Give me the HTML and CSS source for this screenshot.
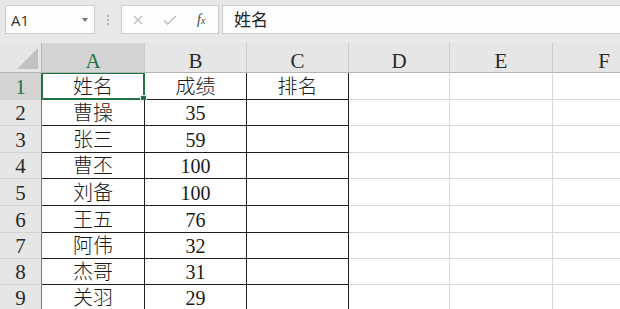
FILE: index.html
```html
<!DOCTYPE html>
<html>
<head>
    <title>成绩表</title>
    <link rel="stylesheet" href="styles.css">
</head>
<body>
    <div class="bar">
        <div class="namebox"><span>A1</span><i class="caret"></i></div>
        <div class="grip"><i></i><i></i><i></i></div>
        <div class="fbtns">
            <svg class="ico" width="10" height="10" viewBox="0 0 10 10"><path d="M1 1L9 9M9 1L1 9" stroke="#bdbdbd" stroke-width="1.3" fill="none"/></svg>
            <svg class="ico" width="14" height="10" viewBox="0 0 14 10"><path d="M1 5.5L4.5 9L13 1" stroke="#bdbdbd" stroke-width="1.4" fill="none"/></svg>
            <span class="fx">f<span class="fx-x">x</span></span>
        </div>
        <div class="finput">姓名</div>
    </div>

    <div class="sheet">
        <div class="row head">
            <div class="corner"><span class="tri"></span></div>
            <div class="col sel">A</div>
            <div class="col">B</div>
            <div class="col">C</div>
            <div class="col">D</div>
            <div class="col">E</div>
            <div class="col">F</div>
        </div>
        <div class="row tall">
            <div class="num sel">1</div>
            <div class="cell box active">姓名<span class="selbox"><span class="handle"></span></span></div>
            <div class="cell box">成绩</div>
            <div class="cell box">排名</div>
            <div class="cell"></div><div class="cell"></div><div class="cell"></div>
        </div>
        <div class="row">
            <div class="num">2</div>
            <div class="cell box">曹操</div><div class="cell box">35</div><div class="cell box"></div>
            <div class="cell"></div><div class="cell"></div><div class="cell"></div>
        </div>
        <div class="row tall">
            <div class="num">3</div>
            <div class="cell box">张三</div><div class="cell box">59</div><div class="cell box"></div>
            <div class="cell"></div><div class="cell"></div><div class="cell"></div>
        </div>
        <div class="row">
            <div class="num">4</div>
            <div class="cell box">曹丕</div><div class="cell box">100</div><div class="cell box"></div>
            <div class="cell"></div><div class="cell"></div><div class="cell"></div>
        </div>
        <div class="row tall">
            <div class="num">5</div>
            <div class="cell box">刘备</div><div class="cell box">100</div><div class="cell box"></div>
            <div class="cell"></div><div class="cell"></div><div class="cell"></div>
        </div>
        <div class="row tall">
            <div class="num">6</div>
            <div class="cell box">王五</div><div class="cell box">76</div><div class="cell box"></div>
            <div class="cell"></div><div class="cell"></div><div class="cell"></div>
        </div>
        <div class="row">
            <div class="num">7</div>
            <div class="cell box">阿伟</div><div class="cell box">32</div><div class="cell box"></div>
            <div class="cell"></div><div class="cell"></div><div class="cell"></div>
        </div>
        <div class="row">
            <div class="num">8</div>
            <div class="cell box">杰哥</div><div class="cell box">31</div><div class="cell box"></div>
            <div class="cell"></div><div class="cell"></div><div class="cell"></div>
        </div>
        <div class="row">
            <div class="num">9</div>
            <div class="cell box">关羽</div><div class="cell box">29</div><div class="cell box"></div>
            <div class="cell"></div><div class="cell"></div><div class="cell"></div>
        </div>
    </div>
</body>
</html>
```

FILE: styles.css
```css
html, body {
    margin: 0;
    overflow: hidden;
    background-color: #e8e8e8;
}

/* formula bar */
.bar {
    display: flex;
    height: 43px;
    padding-top: 5px;
    box-sizing: border-box;
    align-items: flex-start;
}

.namebox {
    width: 90px;
    height: 29px;
    margin-left: 5px;
    box-sizing: border-box;
    border: 1px solid #cdcdcd;
    background-color: #fdfdfd;
    display: flex;
    align-items: center;
    justify-content: space-between;
    padding: 0 6px 0 5px;
    font-family: "Open Sans", "Noto Sans", sans-serif;
    font-size: 15px;
    color: #333;
}

.caret {
    width: 0;
    height: 0;
    border-top: 4px solid #777;
    border-left: 3px solid transparent;
    border-right: 3px solid transparent;
}

.grip {
    width: 26px;
    height: 29px;
    display: flex;
    flex-direction: column;
    align-items: center;
    justify-content: center;
    gap: 2px;
}

.grip i {
    width: 2px;
    height: 2px;
    background-color: #b3b3b3;
}

.fbtns {
    width: 98px;
    height: 29px;
    box-sizing: border-box;
    border: 1px solid #cdcdcd;
    background-color: #fdfdfd;
    display: flex;
    align-items: center;
    gap: 20px;
    padding-left: 11px;
}

.fx {
    font-family: "Liberation Serif", serif;
    font-style: italic;
    font-size: 14px;
    color: #444;
    width: 12px;
}

.fx-x {
    font-size: 10px;
}

.finput {
    flex: 1;
    height: 29px;
    margin-left: 3px;
    box-sizing: border-box;
    border: 1px solid #cdcdcd;
    border-right: none;
    background-color: #fdfdfd;
    padding-left: 11px;
    font-family: "Noto Sans CJK SC", sans-serif;
    font-size: 17px;
    line-height: 26px;
    color: #222;
}

/* grid */
.sheet {
    display: flex;
    flex-direction: column;
    overflow: hidden;
}

.row {
    display: grid;
    grid-template-columns: 42px 103px 102px 102px 101px 103px 103px;
    height: 26px;
    overflow: hidden;
}

.row.tall {
    height: 27px;
}

.row.head {
    height: 30px;
}

.row > div {
    box-sizing: border-box;
}

.corner,
.col {
    background-color: #e6e6e6;
    border-bottom: 1px solid #b5b5b5;
    border-right: 1px solid #cbcbcb;
}

.corner {
    position: relative;
    border-right-color: #b5b5b5;
}

.tri {
    position: absolute;
    right: 3px;
    bottom: 3px;
    width: 0;
    height: 0;
    border-bottom: 21px solid #c2c2c2;
    border-left: 21px solid transparent;
}

.col {
    display: flex;
    justify-content: center;
    align-items: flex-end;
    font-family: "Liberation Serif", serif;
    font-size: 21px;
    line-height: 22px;
    color: #2a2a2a;
}

.num {
    background-color: #e6e6e6;
    border-right: 1px solid #777;
    border-bottom: 1px solid #d2d2d2;
    display: flex;
    justify-content: center;
    align-items: flex-end;
    font-family: "Liberation Serif", serif;
    font-size: 21px;
    line-height: 24px;
    color: #2a2a2a;
}

.col.sel,
.num.sel {
    background-color: #d4d4d4;
    color: #217346;
}

.cell {
    background-color: #fff;
    border-right: 1px solid #d9d9d9;
    border-bottom: 1px solid #d9d9d9;
    display: flex;
    justify-content: center;
    align-items: flex-end;
    font-family: "Liberation Serif", "Noto Sans CJK SC", serif;
    font-size: 20px;
    font-weight: 300;
    line-height: 24px;
    color: #1a1a1a;
}

.cell.box {
    border-right-color: #1e1e1e;
    border-bottom-color: #1e1e1e;
}

.cell.active {
    position: relative;
}

.selbox {
    position: absolute;
    left: -1px;
    top: -1px;
    width: 104px;
    height: 28px;
    box-sizing: border-box;
    border: 2px solid #217346;
}

.handle {
    position: absolute;
    right: -4px;
    bottom: -4px;
    width: 5px;
    height: 5px;
    background-color: #217346;
    border: 1px solid #fff;
}
```
